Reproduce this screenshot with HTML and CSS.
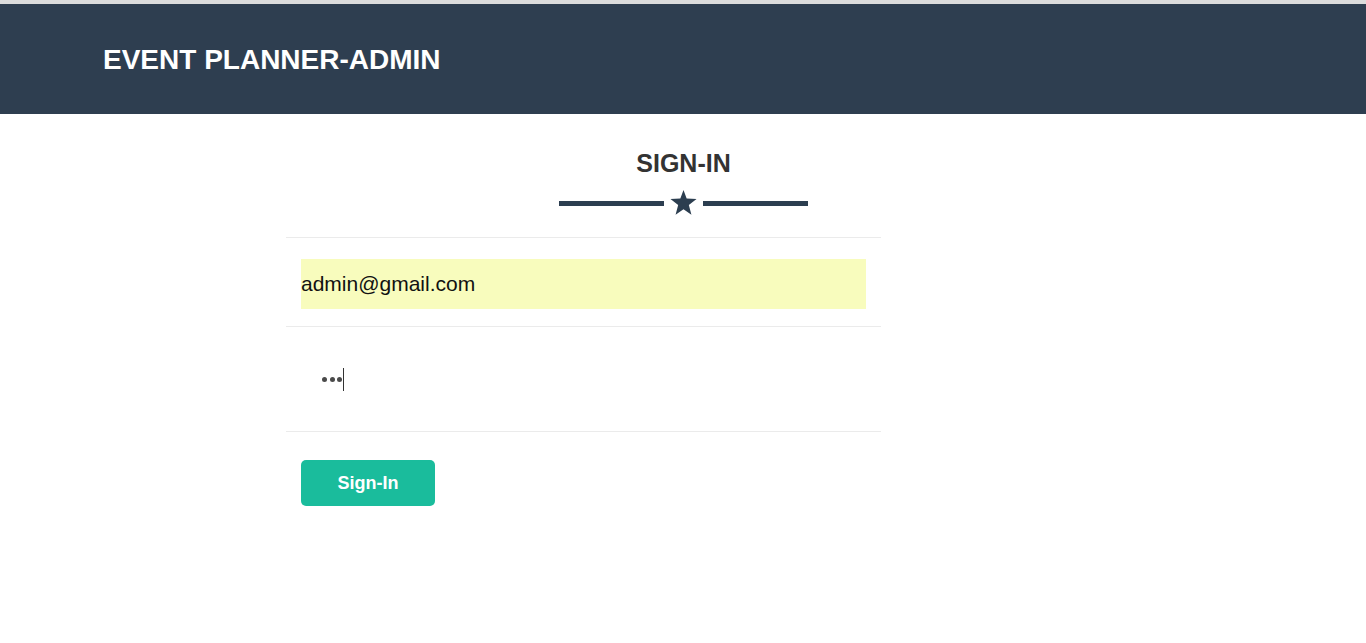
FILE: index.html
```html
<!DOCTYPE html>
<html>
<head>
<meta charset="utf-8">
<title>Event Planner Admin</title>
<link rel="stylesheet" href="styles.css">
</head>
<body>
<div class="topstrip"></div>
<header class="header">
  <h1 class="brand">EVENT PLANNER-ADMIN</h1>
</header>
<main class="main">
  <div class="heading">
    <h2 class="title">SIGN-IN</h2>
    <div class="divider">
      <span class="line"></span>
      <svg class="star" viewBox="0 0 24 23" width="27" height="25"><path fill="#2c3e50" d="M12 0l2.9 7.8 9.1.5-7.1 5.6 2.4 8.9L12 17.7l-7.3 5.1 2.4-8.9L0 8.3l9.1-.5z"/></svg>
      <span class="line"></span>
    </div>
  </div>
  <form class="form">
    <div class="row row-email">
      <input class="field field-email" type="text" value="admin@gmail.com">
    </div>
    <div class="row row-pass">
      <div class="field field-pass">
        <span class="dot"></span><span class="dot"></span><span class="dot"></span><span class="caret"></span>
      </div>
    </div>
    <div class="row row-btn">
      <button type="button" class="btn">Sign-In</button>
    </div>
  </form>
</main>
</body>
</html>
```
FILE: styles.css
```css
* { box-sizing: border-box; }
html, body { margin: 0; padding: 0; background: #fff; }
body { font-family: "Liberation Sans", Arial, sans-serif; }
.topstrip { height: 4px; background: #dcdcdc; }
.header {
  background: #2e3e50;
  height: 110px;
  display: flex;
  align-items: center;
  padding-left: 103px;
}
.brand {
  margin: 0;
  color: #fff;
  font-size: 28px;
  font-weight: bold;
  line-height: 1;
  padding-top: 1px;
}
.heading { display: flex; flex-direction: column; align-items: center; }
.title {
  margin: 35px 0 0;
  font-size: 25px;
  font-weight: bold;
  color: #333;
  line-height: 28px;
  padding-left: 1px;
}
.divider {
  display: flex;
  align-items: center;
  gap: 6px;
  margin-top: 13px;
  height: 26px;
  padding-left: 1px;
}
.line { width: 105px; height: 5px; background: #2c3e50; }
.star { display: block; margin-top: -1px; }
.form { margin: 21px 0 0 286px; width: 595px; }
.row { border-top: 1px solid #ebebeb; padding: 0 15px; }
.row-email { padding-top: 21px; padding-bottom: 17px; }
.row-pass { height: 105px; display: flex; align-items: center; }
.row-btn { padding-top: 28px; }
.field {
  display: block;
  width: 565px;
  height: 50px;
  border: none;
  outline: none;
  margin: 0;
}
.field-email {
  background: #f8fcbd;
  padding: 0;
  font-family: "Liberation Sans", Arial, sans-serif;
  font-size: 21px;
  color: #111;
}
.field-pass {
  display: flex;
  align-items: center;
  gap: 2.5px;
  padding-left: 21px;
  margin-top: 0;
}
.dot { flex: none; width: 5px; height: 5px; border-radius: 50%; background: #4a4a4a; }
.caret { flex: none; width: 1px; height: 23px; background: #333; margin-left: -1.5px; }
.btn {
  width: 134px;
  height: 46px;
  background: #1abc9c;
  color: #fff;
  border: none;
  border-radius: 5px;
  font-family: "Liberation Sans", Arial, sans-serif;
  font-size: 18px;
  font-weight: bold;
  padding: 0;
  cursor: pointer;
}
```
